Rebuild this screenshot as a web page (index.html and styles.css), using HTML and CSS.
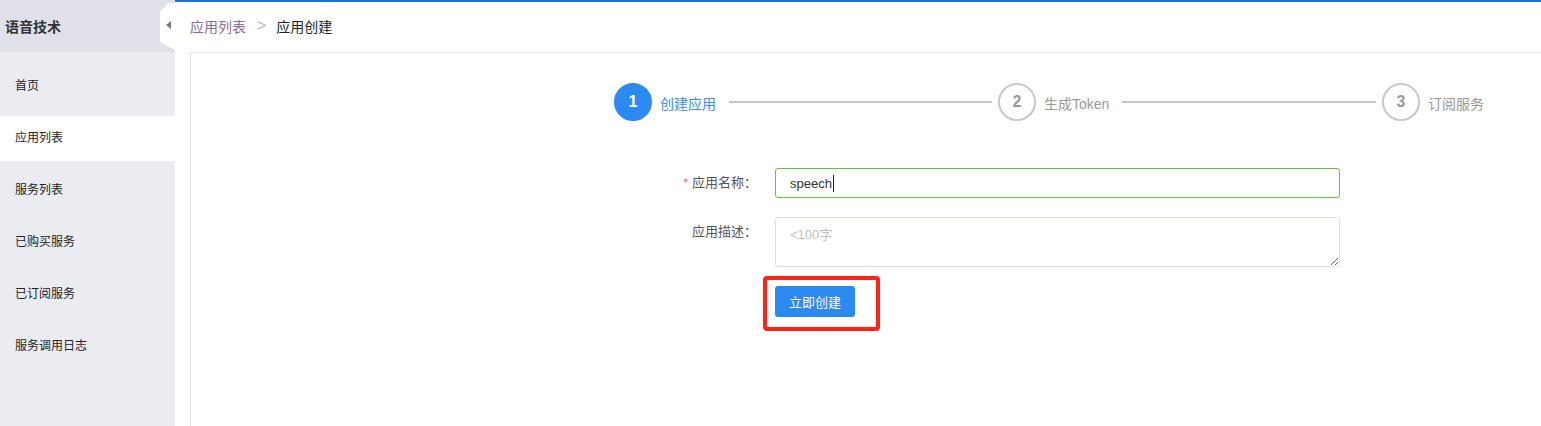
FILE: index.html
```html
<!DOCTYPE html>
<html lang="zh-CN">
<head>
<meta charset="utf-8">
<title>应用创建</title>
<link rel="stylesheet" href="styles.css">
</head>
<body>
<div class="app">
  <aside class="sidebar">
    <div class="side-head">
      <span class="side-title">语音技术</span>
      <div class="collapse"><span class="tri"></span></div>
    </div>
    <nav class="menu">
      <div class="menu-item">首页</div>
      <div class="menu-item active">应用列表</div>
      <div class="menu-item">服务列表</div>
      <div class="menu-item">已购买服务</div>
      <div class="menu-item">已订阅服务</div>
      <div class="menu-item">服务调用日志</div>
    </nav>
  </aside>
  <main class="main">
    <div class="crumbs">
      <span class="crumb-link">应用列表</span>
      <span class="crumb-sep">&gt;</span>
      <span class="crumb-cur">应用创建</span>
    </div>
    <section class="panel">
      <div class="steps">
        <div class="step done">
          <span class="circle">1</span>
          <span class="step-label">创建应用</span>
          <span class="step-line"></span>
        </div>
        <div class="step">
          <span class="circle">2</span>
          <span class="step-label">生成Token</span>
          <span class="step-line"></span>
        </div>
        <div class="step last">
          <span class="circle">3</span>
          <span class="step-label">订阅服务</span>
        </div>
      </div>
      <form class="form">
        <div class="row">
          <label class="label"><span class="req">*</span> 应用名称：</label>
          <div class="input focused"><span class="val">speech</span><span class="caret"></span></div>
        </div>
        <div class="row">
          <label class="label">应用描述：</label>
          <textarea class="textarea" placeholder="<100字"></textarea>
        </div>
        <div class="row">
          <span class="label"></span>
          <div class="btn-wrap">
            <button type="button" class="btn">立即创建</button>
            <span class="mark"></span>
          </div>
        </div>
      </form>
    </section>
  </main>
</div>
</body>
</html>
```
FILE: styles.css
```css
* { box-sizing: border-box; }
html, body { margin: 0; height: 100%; }
body {
  font-family: "Liberation Sans", "Noto Sans CJK SC", sans-serif;
  color: #333;
  background: #fff;
  overflow: hidden;
}
.app { display: flex; height: 426px; }

.sidebar {
  width: 175px;
  flex: none;
  display: flex;
  flex-direction: column;
  background: #ebecf1;
}
.side-head {
  position: relative;
  height: 52px;
  background: #dfe0e8;
  display: flex;
  align-items: center;
  padding-left: 5px;
}
.side-title { font-size: 14px; font-weight: bold; color: #333; }
.collapse {
  position: absolute;
  right: 0;
  top: 3px;
  width: 15px;
  height: 47px;
  background: #fff;
  clip-path: polygon(8px 0, 100% 0, 100% 100%, 100% 100%, 0 calc(100% - 8px), 0 9px);
  display: flex;
  align-items: center;
  justify-content: center;
  padding-left: 2px;
  padding-bottom: 4px;
}
.tri {
  width: 0; height: 0;
  border-top: 4px solid transparent;
  border-bottom: 4px solid transparent;
  border-right: 5px solid #777;
}
.menu { padding-top: 12px; display: flex; flex-direction: column; gap: 7px; }
.menu-item {
  height: 45px;
  line-height: 45px;
  padding-left: 15px;
  font-size: 12px;
  color: #222;
}
.menu-item.active { background: #fff; }

.main {
  flex: 1;
  display: flex;
  flex-direction: column;
  border-top: 2px solid #1b74d6;
  min-width: 0;
}
.crumbs {
  height: 50px;
  display: flex;
  align-items: center;
  padding-left: 15px;
  font-size: 14px;
  padding-bottom: 2px;
}
.crumb-link { color: #8b6f99; }
.crumb-sep { color: #b8b8b8; margin: 0 10px 0 11px; font-size: 16px; }
.crumb-cur { color: #222; }

.panel {
  flex: 1;
  margin-left: 15px;
  border-top: 1px solid #e4e4e4;
  border-left: 1px solid #e4e4e4;
  padding-top: 30px;
}

.steps { display: flex; margin-left: 423px; }
.step { display: flex; align-items: center; width: 384px; }
.step.last { width: auto; }
.circle {
  width: 38px; height: 38px;
  border-radius: 50%;
  border: 2px solid #c6c8cd;
  display: flex; align-items: center; justify-content: center;
  font-size: 16px; font-weight: bold; color: #999;
  flex: none;
}
.step-label { margin-left: 8px; font-size: 14px; color: #999; padding-top: 2px; }
.step-line { flex: 1; height: 2px; background: #c3c5cc; margin: 0 6px 0 13px; }
.step.done .circle { background: #2b8af2; border-color: #2b8af2; color: #fff; }
.step.done .step-label { color: #3a8ee6; }

.form { margin-left: 484px; margin-top: 47px; display: flex; flex-direction: column; gap: 19px; }
.row { display: flex; align-items: flex-start; }
.label {
  width: 100px;
  flex: none;
  text-align: right;
  padding-right: 18px;
  font-size: 13px;
  line-height: 30px;
  color: #555;
}
.req { color: #f56c6c; }
.input {
  width: 565px;
  height: 30px;
  border: 1px solid #dcdfe6;
  border-radius: 3px;
  padding: 0 14px;
  display: flex;
  align-items: center;
  font-size: 13px;
  color: #333;
}
.input.focused { border-color: #67c23a; }
.caret { width: 1px; height: 17px; background: #222; margin-left: 1px; }
.textarea {
  width: 565px;
  height: 50px;
  border: 1px solid #dcdfe6;
  border-radius: 3px;
  padding: 8px 14px;
  font-family: "Liberation Sans", "Noto Sans CJK SC", sans-serif;
  font-size: 13px;
  line-height: 18px;
  color: #333;
  outline: none;
  margin: 0;
  display: block;
}
.textarea::placeholder { color: #bfbfbf; }
.btn-wrap { position: relative; }
.btn {
  width: 80px;
  height: 31px;
  border: none;
  border-radius: 3px;
  background: #2b8af2;
  color: #fff;
  font-family: "Liberation Sans", "Noto Sans CJK SC", sans-serif;
  font-size: 13px;
  padding: 0;
  display: block;
}
.mark {
  position: absolute;
  left: -12px;
  top: -10px;
  right: -25px;
  bottom: -14px;
  border: 4px solid #ff2216;
  border-radius: 4px;
}
```
